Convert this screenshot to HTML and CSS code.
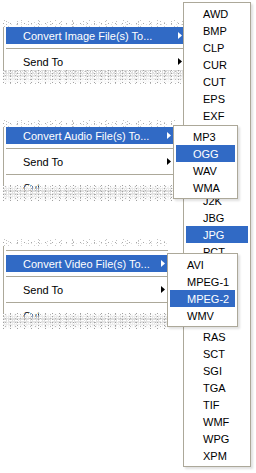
FILE: index.html
```html
<!DOCTYPE html>
<html>
<head>
    <meta charset="utf-8">
    <title>Convert menus</title>
    <link rel="stylesheet" href="styles.css">
</head>
<body>
    <div class="shot">
        <!-- image menu -->
        <div class="menu m1">
            <div class="tear-top"></div>
            <div class="list">
                <div class="item hot">Convert Image File(s) To...<span class="arrow"></span></div>
                <div class="sep"></div>
                <div class="item">Send To<span class="arrow"></span></div>
            </div>
            <div class="tear-bottom"></div>
        </div>

        <!-- audio menu -->
        <div class="menu m2">
            <div class="tear-top"></div>
            <div class="list">
                <div class="item hot">Convert Audio File(s) To...<span class="arrow"></span></div>
                <div class="sep"></div>
                <div class="item">Send To<span class="arrow"></span></div>
                <div class="sep"></div>
                <div class="item">Cut</div>
            </div>
            <div class="tear-bottom over"></div>
        </div>

        <!-- video menu -->
        <div class="menu m3">
            <div class="tear-top"></div>
            <div class="list">
                <div class="sep"></div>
                <div class="item hot">Convert Video File(s) To...<span class="arrow"></span></div>
                <div class="sep"></div>
                <div class="item">Send To<span class="arrow"></span></div>
                <div class="sep"></div>
                <div class="item">Cut</div>
            </div>
            <div class="tear-bottom over"></div>
        </div>

        <div class="sub images">
            <div class="item">AWD</div>
            <div class="item">BMP</div>
            <div class="item">CLP</div>
            <div class="item">CUR</div>
            <div class="item">CUT</div>
            <div class="item">EPS</div>
            <div class="item">EXF</div>
            <div class="item under">GIF</div>
            <div class="item under">ICO</div>
            <div class="item under">IFF</div>
            <div class="item under">IMG</div>
            <div class="item">J2K</div>
            <div class="item">JBG</div>
            <div class="item hot">JPG</div>
            <div class="item">PCT</div>
            <div class="item under">PCX</div>
            <div class="item under">PIC</div>
            <div class="item under">PNG</div>
            <div class="item under">PSD</div>
            <div class="item">RAS</div>
            <div class="item">SCT</div>
            <div class="item">SGI</div>
            <div class="item">TGA</div>
            <div class="item">TIF</div>
            <div class="item">WMF</div>
            <div class="item">WPG</div>
            <div class="item">XPM</div>
        </div>

        <div class="sub audio">
            <div class="item">MP3</div>
            <div class="item hot">OGG</div>
            <div class="item">WAV</div>
            <div class="item">WMA</div>
        </div>

        <div class="sub video">
            <div class="item">AVI</div>
            <div class="item">MPEG-1</div>
            <div class="item hot">MPEG-2</div>
            <div class="item">WMV</div>
        </div>
    </div>
</body>
</html>
```

FILE: styles.css
```css
body {
    margin: 0;
    background: #fff;
    font-family: "Liberation Sans", Arial, sans-serif;
    font-size: 11px;
    color: #000;
}

.shot {
    position: relative;
    width: 256px;
    height: 473px;
    overflow: hidden;
}

.menu {
    margin-left: 3px;
}

.m1 {
    margin-top: 20px;
    width: 184px;
}

.m2 {
    margin-top: 36px;
    width: 173px;
}

.m3 {
    margin-top: 38px;
    width: 167px;
}

.list {
    border-left: 1px solid #aca899;
    padding: 0 2px;
    background: #fff;
}

.item {
    display: flex;
    align-items: center;
    height: 17px;
    padding-left: 17px;
    white-space: nowrap;
}

.item.hot {
    background: #316ac5;
    color: #fff;
}

/* rows hidden behind the audio and video submenus */
.item.under {
    visibility: hidden;
}

.arrow {
    margin-left: auto;
    margin-right: 3px;
    width: 4px;
    height: 7px;
    background: currentColor;
    clip-path: polygon(0 0, 100% 50%, 0 100%);
}

.sep {
    height: 9px;
    background: linear-gradient(#aca899, #aca899) 0 4px / 100% 1px no-repeat;
}

/* dissolved edges where the screenshot was cut */
.tear-top {
    height: 7px;
    background:
        conic-gradient(at 1px 1px, #0000 75%, #a8a8a8 0) 0 3px / 7px 5px,
        conic-gradient(at 1px 1px, #0000 75%, #bdbdbd 0) 3px 1px / 11px 3px,
        conic-gradient(at 1px 1px, #0000 75%, #cfcfcf 0) 5px 2px / 13px 4px,
        conic-gradient(at 1px 1px, #0000 75%, #c4c4c4 0) 1px 0 / 17px 6px,
        conic-gradient(at 1px 1px, #0000 75%, #dedede 0) 8px 4px / 5px 7px;
}

.tear-bottom {
    position: relative;
    height: 14px;
    background:
        conic-gradient(at 1px 1px, #0000 75%, #a0a0a0 0) 0 0 / 7px 3px,
        conic-gradient(at 1px 1px, #0000 75%, #b8b8b8 0) 2px 1px / 5px 4px,
        conic-gradient(at 1px 1px, #0000 75%, #fff 0) 1px 2px / 3px 5px,
        conic-gradient(at 1px 1px, #0000 75%, #fff 0) 4px 0 / 11px 2px,
        conic-gradient(at 1px 1px, #0000 75%, #fff 0) 0 1px / 2px 3px,
        linear-gradient(#dadada, #e8e8e8 45%, #f6f6f6 75%, #fff);
}

.tear-bottom.over {
    margin-top: -11px;
    height: 16px;
    background:
        conic-gradient(at 1px 1px, #0000 75%, #a0a0a0 0) 0 0 / 7px 3px,
        conic-gradient(at 1px 1px, #0000 75%, #b8b8b8 0) 2px 1px / 5px 4px,
        conic-gradient(at 1px 1px, #0000 75%, #fff 0) 1px 2px / 3px 5px,
        conic-gradient(at 1px 1px, #0000 75%, #fff 0) 4px 0 / 11px 2px,
        conic-gradient(at 1px 1px, #0000 75%, #fff 0) 0 1px / 2px 3px,
        linear-gradient(#fff0, #dcdcdc 40%, #ececec 70%, #fff);
}

/* submenus lie over the parent menus */
.sub {
    position: absolute;
    border: 1px solid #aca899;
    padding: 2px;
    background: #fff;
    box-shadow: 2px 2px 2px rgba(0, 0, 0, .12);
}

.images {
    left: 183px;
    top: 2px;
    width: 62px;
}

.audio {
    left: 173px;
    top: 125px;
    width: 59px;
}

.video {
    left: 167px;
    top: 253px;
    width: 65px;
}
```
